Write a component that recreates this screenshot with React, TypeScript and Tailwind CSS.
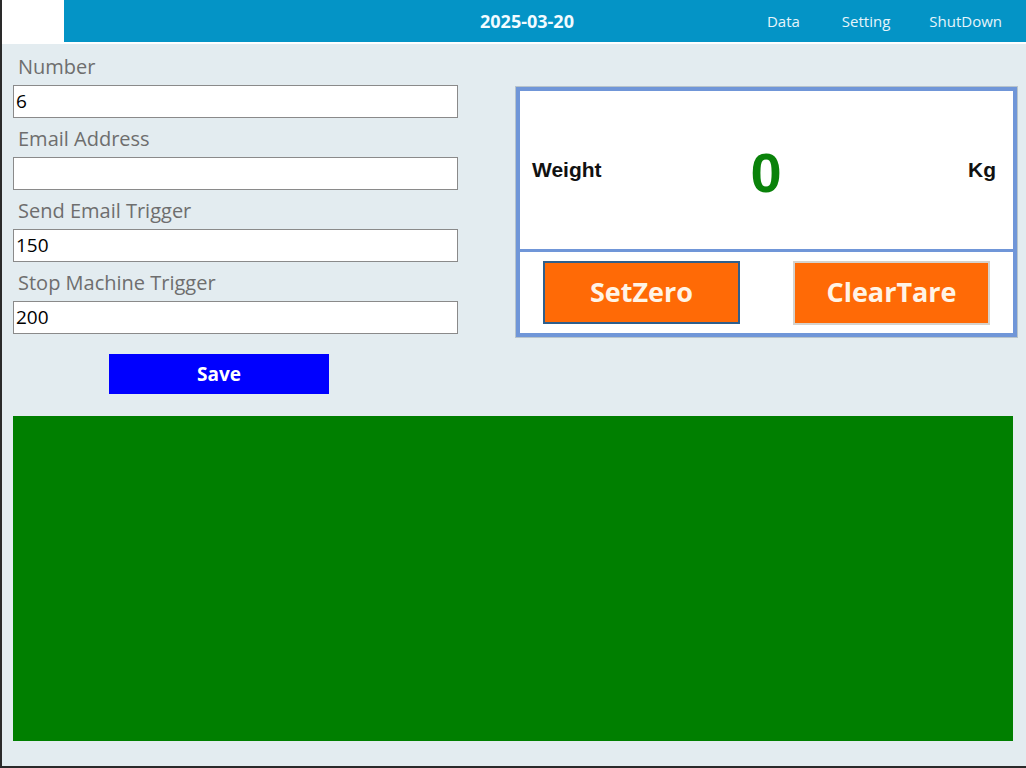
import React from "react";

const sans = { fontFamily: '"Open Sans", "Noto Sans", sans-serif' } as const;

function Field({ label, value }: { label: string; value: string }) {
  return (
    <div className="flex flex-col">
      <div className="h-[39px] flex items-center pt-[3px] pl-[5px] text-[20px] text-[#6e6e6e]">{label}</div>
      <div className="h-[33px] bg-white border border-[#8a8a8a] flex items-center pl-[2px] text-[19px] text-black">
        {value}
      </div>
    </div>
  );
}

export default function App() {
  return (
    <div
      className="w-[1026px] h-[768px] bg-[#E3ECF0] flex flex-col border-l-2 border-[#2a2a2a] border-b-2 overflow-hidden"
      style={sans}
    >
      {/* header */}
      <div className="h-[42px] flex shrink-0">
        <div className="w-[62px] bg-white" />
        <div className="flex-1 bg-[#0494C6] relative flex items-center">
          <div className="absolute left-[416px] top-0 h-full flex items-center text-[18px] font-bold text-[#f2fbff]">
            2025-03-20
          </div>
          <div className="ml-auto flex items-center text-[15px] text-[#e6f5fb] pr-[24px]">
            <span className="mr-[42px]">Data</span>
            <span className="mr-[39px]">Setting</span>
            <span>ShutDown</span>
          </div>
        </div>
      </div>
      <div className="h-[2px] bg-white shrink-0" />

      {/* top area */}
      <div className="flex pt-[2px] pl-[11px]">
        <div className="w-[445px] flex flex-col">
          <Field label="Number" value="6" />
          <Field label="Email Address" value="" />
          <Field label="Send Email Trigger" value="150" />
          <Field label="Stop Machine Trigger" value="200" />
          <div className="mt-[20px] ml-[96px] w-[220px] h-[40px] bg-[#0000FF] flex items-center justify-center text-white font-bold text-[19px]">
            Save
          </div>
        </div>

        <div className="ml-[57px] mt-[40px] w-[503px] h-[252px] border border-[#b8c4cc] self-start">
          <div className="w-full h-full border-4 border-[#7096D8] flex flex-col">
            <div
              className="h-[158px] bg-white grid grid-cols-[1fr_auto_1fr] items-center pl-[12px] pr-[17px]"
              style={{ fontFamily: '"Liberation Sans", Arial, sans-serif' }}
            >
              <span className="text-[21px] font-bold text-[#111]">Weight</span>
              <span className="text-[56px] font-bold text-[#0a820a] leading-none mt-[6px] ml-[4px]">0</span>
              <span className="text-[21px] font-bold text-[#111] justify-self-end">Kg</span>
            </div>
            <div className="h-[3px] bg-[#7096D8]" />
            <div className="flex-1 bg-white flex items-center justify-between px-[23px]">
              <div className="w-[197px] h-[63px] bg-[#FF6A06] border-2 border-[#2f5f8c] flex items-center justify-center text-[27px] font-bold text-[#fff4e6]">
                SetZero
              </div>
              <div className="w-[197px] h-[64px] bg-[#FF6A06] border-2 border-[#d6d2cc] flex items-center justify-center text-[27px] font-bold text-[#fff4e6]">
                ClearTare
              </div>
            </div>
          </div>
        </div>
      </div>

      {/* green area */}
      <div className="mt-[22px] ml-[11px] w-[1000px] h-[325px] bg-[#007F00]" />
    </div>
  );
}
